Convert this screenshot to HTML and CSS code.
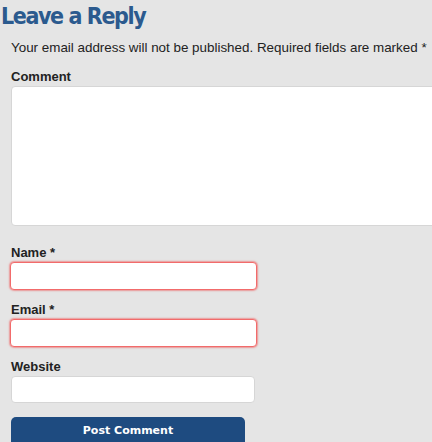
FILE: index.html
```html
<!DOCTYPE html>
<html lang="en">
<head>
    <meta charset="UTF-8">
    <title>Leave a Reply</title>
    <link rel="stylesheet" href="styles.css">
</head>
<body>
    <div id="respond">
        <h3 class="reply-title">Leave a Reply</h3>
        <form class="comment-form">
            <p class="comment-notes">Your email address will not be published. Required fields are marked *</p>

            <div class="field">
                <label for="comment">Comment</label>
                <textarea id="comment"></textarea>
            </div>

            <div class="field">
                <label for="author">Name *</label>
                <input id="author" type="text" class="required">
            </div>

            <div class="field">
                <label for="email">Email *</label>
                <input id="email" type="text" class="required">
            </div>

            <div class="field">
                <label for="url">Website</label>
                <input id="url" type="text">
            </div>

            <button type="button" class="submit">Post Comment</button>
        </form>
    </div>
</body>
</html>
```

FILE: styles.css
```css
body {
    margin: 0;
    background: #e5e5e5;
    font-family: "Liberation Sans", Arial, sans-serif;
    color: #222;
    overflow: hidden;
}

#respond {
    width: 460px;
}

.reply-title {
    margin: 0;
    padding: 1px 0 0 1px;
    font-family: "DejaVu Sans Condensed", "Liberation Sans Narrow", sans-serif;
    font-size: 23px;
    font-weight: bold;
    line-height: 30px;
    color: #2b5a8e;
    letter-spacing: -1.4px;
}

.comment-form {
    padding: 0 0 0 11px;
}

.comment-notes {
    margin: 9px 0 0;
    font-size: 13.4px;
    line-height: 16px;
    color: #222;
}

.field {
    display: flex;
    flex-direction: column;
}

.field label {
    font-size: 13px;
    font-weight: bold;
    line-height: 16px;
    color: #222;
    margin-top: 12px;
    margin-bottom: 1px;
}

.field:first-of-type label {
    margin-top: 13px;
}

textarea,
input {
    box-sizing: border-box;
    background: #fff;
    border: 1px solid #d6d6d6;
    border-radius: 4px;
    font: inherit;
}

textarea {
    width: 440px;
    height: 140px;
    resize: none;
    margin-bottom: 7px;
}

input {
    width: 247px;
    height: 28px;
    margin-left: -1px;
}

input.required {
    border: 1px solid #f26b6b;
    box-shadow: 0 0 1.5px 1px rgba(240, 90, 90, 0.55);
}

#url {
    margin-left: 0;
    width: 244px;
    height: 27px;
}

.submit {
    margin-top: 14px;
    width: 234px;
    height: 30px;
    background: #1e4b80;
    color: #fff;
    border: none;
    border-radius: 5px;
    font-family: "DejaVu Sans", Verdana, sans-serif;
    font-size: 11px;
    font-weight: bold;
    padding: 0 0 4px;
}
```
